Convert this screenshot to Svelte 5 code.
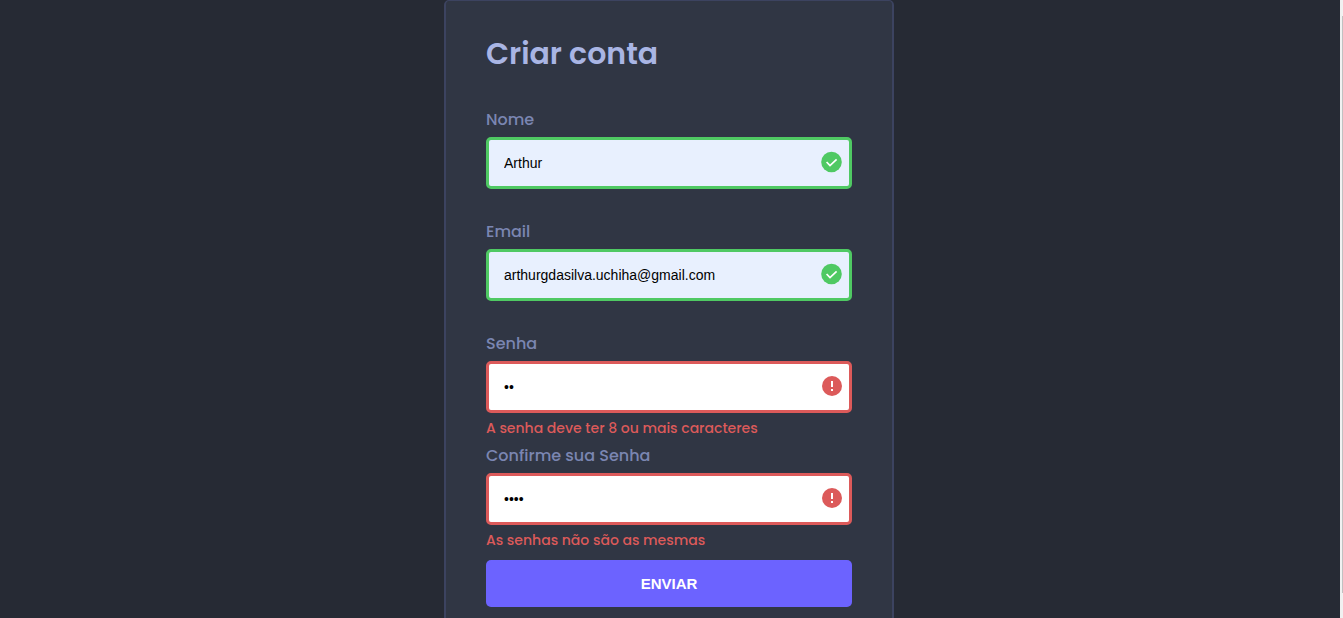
<script>
  let fields = $state([
    { id: 'name', label: 'Nome', type: 'text', value: 'Arthur', error: '' },
    { id: 'email', label: 'Email', type: 'email', value: 'arthurgdasilva.uchiha@gmail.com', error: '' },
    { id: 'password', label: 'Senha', type: 'password', value: 'ab', error: 'A senha deve ter 8 ou mais caracteres' },
    { id: 'confirm', label: 'Confirme sua Senha', type: 'password', value: 'abcd', error: 'As senhas não são as mesmas' }
  ]);
</script>

<div class="page">
  <main>
    <form class="card" novalidate onsubmit={(e) => e.preventDefault()}>
      <h1>Criar conta</h1>
      {#each fields as field (field.id)}
        <div class="field" class:invalid={field.error}>
          <label for={field.id}>{field.label}</label>
          <div class="control">
            <input id={field.id} type={field.type} bind:value={field.value} autocomplete="off" spellcheck="false" />
            <svg class="status" viewBox="0 0 24 24" aria-hidden="true">
              {#if field.error}
                <circle cx="13" cy="12" r="10" />
                <path class="bang" d="M12 7h2v6h-2zM12 15h2v2h-2z" />
              {:else}
                <circle cx="12.5" cy="12" r="10.3" />
                <path class="check" d="M7.6 12l3.4 3.5L17.6 9.3" />
              {/if}
            </svg>
          </div>
          {#if field.error}<small>{field.error}</small>{/if}
        </div>
      {/each}
      <button type="submit">ENVIAR</button>
    </form>
  </main>
  <div class="track"><div class="thumb"></div></div>
</div>

<style>
  :global(body) {
    background: #262a34;
  }
  * {
    box-sizing: border-box;
  }
  .page {
    display: flex;
    height: 100vh;
    overflow: hidden;
    font-family: Poppins, Inter, sans-serif;
    background: #262a34;
  }
  main {
    flex: 1;
    padding: 0 2px 0 0;
  }
  .card {
    width: 100%;
    max-width: 450px;
    min-height: 100%;
    margin: 0 auto;
    padding: 29px 40px 40px;
    border: 2px solid #3c4360;
    border-top-width: 1px;
    border-radius: 5px;
    background: #303644;
  }
  h1 {
    margin: 0 0 30px;
    font-size: 30px;
    line-height: 48px;
    font-weight: 600;
    color: #a9b5e4;
  }
  .field {
    --state: #4fc963;
    height: 112px;
    display: flex;
    flex-direction: column;
  }
  .field.invalid {
    --state: #dc5a5a;
  }
  label {
    margin-bottom: 5px;
    font-size: 16px;
    line-height: 24px;
    font-weight: 500;
    color: #7b86b2;
  }
  .control {
    position: relative;
    display: flex;
  }
  input {
    width: 100%;
    height: 52px;
    padding: 0 40px 0 15px;
    border: 3px solid var(--state);
    border-radius: 5px;
    outline: none;
    background: #e8f0fe;
    color: #000;
    font: 14px "Liberation Sans", Arial, sans-serif;
  }
  .invalid input {
    background: #fff;
  }
  .status {
    position: absolute;
    top: 13px;
    right: 9px;
    width: 24px;
    height: 24px;
    fill: var(--state);
  }
  .check {
    fill: none;
    stroke: #fff;
    stroke-width: 1.7;
  }
  .bang {
    fill: #fff;
  }
  small {
    margin-top: 4px;
    font-size: 14px;
    line-height: 22px;
    font-weight: 500;
    color: #dc5a5a;
  }
  button {
    display: block;
    width: 100%;
    height: 47px;
    margin-top: 4px;
    border: 0;
    border-radius: 5px;
    background: #6c63ff;
    color: #fff;
    font: bold 15px "Liberation Sans", Arial, sans-serif;
    cursor: pointer;
  }
  .track {
    width: 3px;
    padding: 16px 0 25px 2px;
    background: #f1f1f1;
  }
  .thumb {
    height: 100%;
    background: #c1c1c1;
  }
</style>
